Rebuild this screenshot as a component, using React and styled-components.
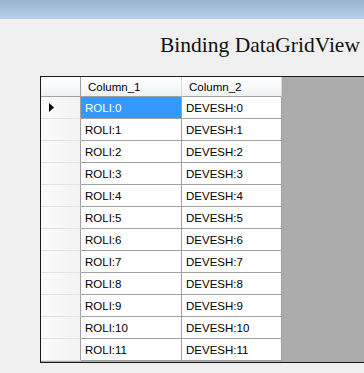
import React from "react";
import styled, { createGlobalStyle } from "styled-components";

const Global = createGlobalStyle`
  html, body { margin: 0; padding: 0; background: #f0f0f0; overflow: hidden; }
  body { width: 364px; height: 373px; }
`;

const Window = styled.div`
  width: 364px;
  height: 373px;
  display: flex;
  flex-direction: column;
  background: #f0f0f0;
  overflow: hidden;
`;

const TitleBar = styled.div`
  height: 19px;
  flex: none;
  background: linear-gradient(to bottom, #9ab3d1, #b6cfea);
`;

const Heading = styled.h1`
  margin: 0;
  padding: 13px 0 0 160px;
  height: 43px;
  box-sizing: border-box;
  font-family: "Liberation Serif", "DejaVu Serif", serif;
  font-weight: normal;
  font-size: 21.5px;
  line-height: 26px;
  color: #111;
  white-space: nowrap;
`;

const GridFrame = styled.div`
  margin: 14px 0 0 40px;
  width: 340px;
  height: 287px;
  box-sizing: border-box;
  border: 1px solid #1a1a1a;
  border-right: none;
  display: flex;
  background: #ababab;
  font-family: "Liberation Sans", Arial, sans-serif;
  font-size: 11.5px;
  color: #000;
`;

const Table = styled.div`
  display: grid;
  grid-template-columns: 40px 101px 100px;
  grid-auto-rows: 22px;
  grid-template-rows: 20px;
  align-self: flex-start;
  background: #fff;
`;

const HeaderCell = styled.div`
  box-sizing: border-box;
  border-bottom: 1px solid #a0a0a0;
  border-right: 1px solid ${(p) => (p.$corner ? "#a0a0a0" : "#d8d8d8")};
  background: linear-gradient(to bottom, #ffffff 0%, #f7f8fa 60%, #eef0f2 100%);
  padding-left: 7px;
  display: flex;
  align-items: center;
`;

const RowHeader = styled.div`
  box-sizing: border-box;
  border-bottom: 1px solid #e2e2e2;
  border-right: 1px solid #a0a0a0;
  background: linear-gradient(to right, #fbfbfb, #f3f3f3);
  display: flex;
  align-items: center;
  padding-left: 8px;
`;

const Cell = styled.div`
  box-sizing: border-box;
  border-bottom: 1px solid #a0a0a0;
  border-right: 1px solid #a0a0a0;
  background: ${(p) => (p.$selected ? "#3399ff" : "#ffffff")};
  color: ${(p) => (p.$selected ? "#ffffff" : "#000000")};
  padding-left: 4px;
  display: flex;
  align-items: center;
  white-space: nowrap;
`;

const Arrow = () => (
  <svg width="5" height="9" viewBox="0 0 5 9">
    <polygon points="0,0 5,4.5 0,9" fill="#000" />
  </svg>
);

const rows = Array.from({ length: 12 }, (_, i) => i);

export default function App() {
  return (
    <Window>
      <Global />
      <TitleBar />
      <Heading>Binding DataGridView</Heading>
      <GridFrame>
        <Table>
          <HeaderCell $corner />
          <HeaderCell>Column_1</HeaderCell>
          <HeaderCell>Column_2</HeaderCell>
          {rows.map((i) => (
            <React.Fragment key={i}>
              <RowHeader>{i === 0 ? <Arrow /> : null}</RowHeader>
              <Cell $selected={i === 0}>ROLI:{i}</Cell>
              <Cell>DEVESH:{i}</Cell>
            </React.Fragment>
          ))}
        </Table>
      </GridFrame>
    </Window>
  );
}
